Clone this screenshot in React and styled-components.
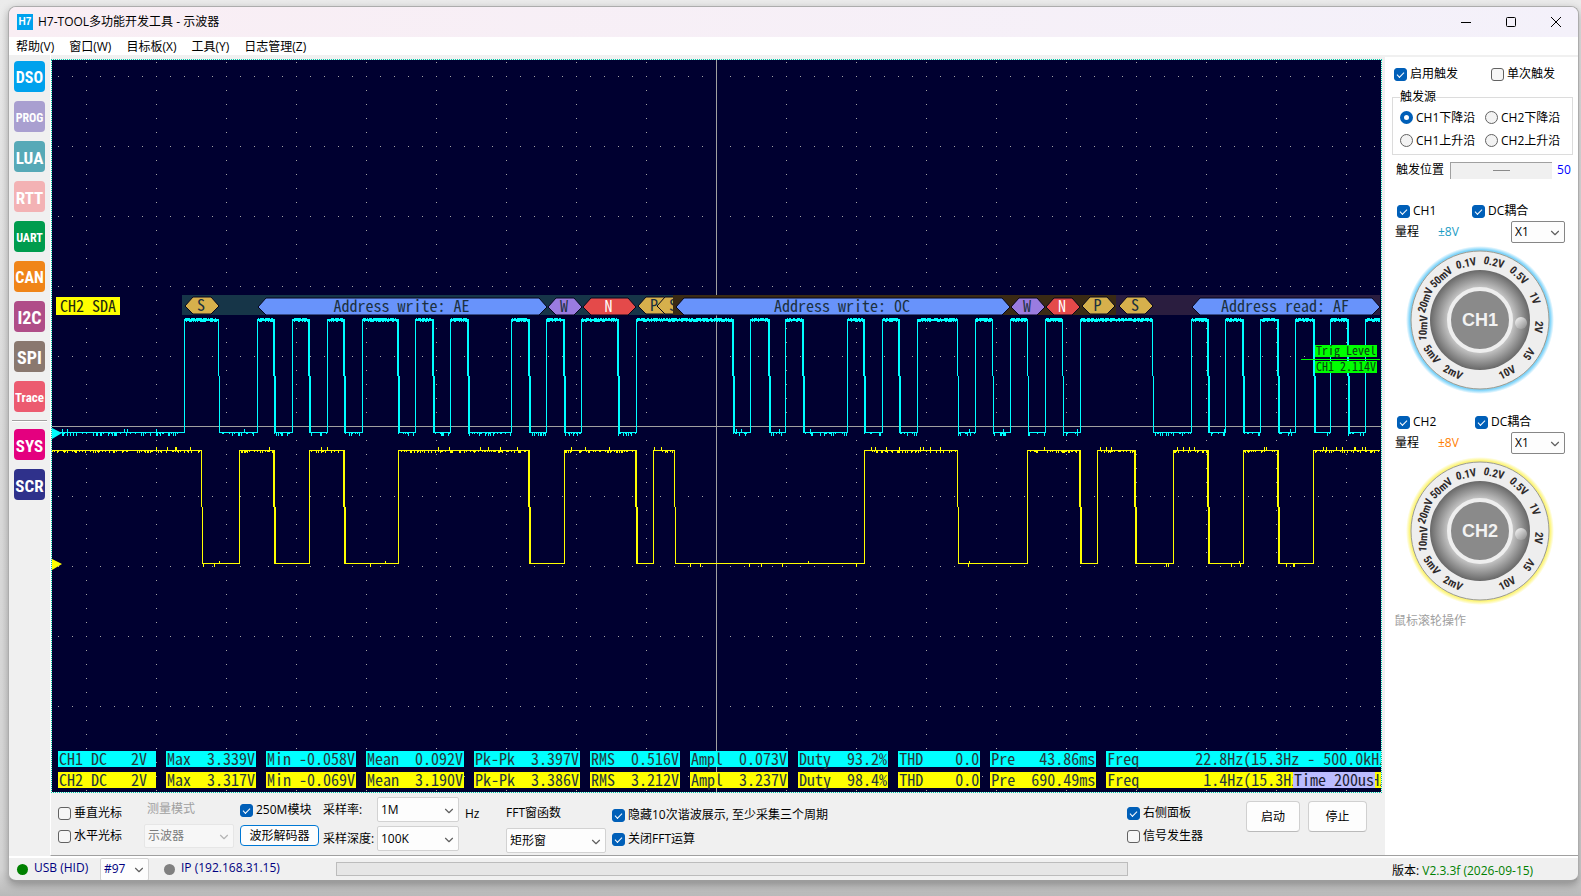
import React from "react";
import styled, { createGlobalStyle, css } from "styled-components";
import { ChevronDown } from "lucide-react";

const GlobalStyle = createGlobalStyle`
  * {
    box-sizing: border-box;
  }
  body {
    margin: 0;
    background: linear-gradient(#ebebeb, #dcdcdc 50%, #d6d6d6 97%, #b9b9b9);
    color: #000;
    font-family: "Open Sans", "Noto Sans CJK SC", sans-serif;
    font-size: 12px;
    line-height: 16px;
  }
  button, input, select, legend {
    font: inherit;
    color: inherit;
  }
`;

const MONO = `"Noto Sans Mono CJK SC", "Liberation Mono", monospace`;
const NARROW = `"Liberation Sans Narrow", "Roboto Condensed", "Liberation Sans", sans-serif`;

/* ---------- window ---------- */

const Desktop = styled.div`
  min-height: 100vh;
  padding: 6px 2px 14px 8px;
  display: flex;
`;

const Window = styled.div`
  flex: 1;
  display: flex;
  flex-direction: column;
  overflow: hidden;
  background: #f0f0f0;
  border: 1px solid #acacac;
  border-bottom: 2px solid #9c9c9c;
  border-radius: 8px;
  box-shadow: 0 3px 8px rgba(0, 0, 0, 0.3);
`;

const TitleBar = styled.header`
  height: 30px;
  display: flex;
  align-items: center;
  padding-left: 8px;
  background: linear-gradient(90deg, #f9eef4, #f4f1fa);
`;

const AppIcon = styled.span`
  width: 16px;
  height: 16px;
  margin-right: 5px;
  background: #00a2ed;
  color: #fff;
  font: bold 10px/16px "Liberation Sans", sans-serif;
  text-align: center;
`;

const Title = styled.h1`
  flex: 1;
  margin: 0;
  font-size: 12px;
  font-weight: 400;
`;

const CaptionButton = styled.button`
  width: 45px;
  height: 30px;
  padding: 0;
  border: 0;
  background: none;

  svg {
    display: block;
    margin: 0 auto;
  }
`;

const MenuBar = styled.nav`
  height: 18px;
  display: flex;
  align-items: flex-end;
  gap: 15px;
  padding-left: 7px;
  background: #fff;
`;

const MenuLink = styled.a`
  color: #000;
  text-decoration: none;
`;

const Body = styled.div`
  flex: 1;
  display: flex;
`;

const Main = styled.main`
  flex: 1;
  min-width: 0;
  display: flex;
  flex-direction: column;
  border-left: 1px solid #fff;
  border-bottom: 1px solid #a0a0a0;
`;

/* ---------- left toolbar ---------- */

const ToolBar = styled.aside`
  width: 41px;
  display: flex;
  flex-direction: column;
  align-items: center;
  gap: 9px;
  padding-top: 6px;
`;

const ToolButton = styled.button`
  width: 31px;
  height: 31px;
  padding: 2px 0 0;
  display: flex;
  justify-content: center;
  align-items: center;
  border: 0;
  border-radius: 4px;
  background: ${(p) => p.$color};
  color: #fff;
  font: bold ${(p) => p.$size || 16}px/20px ${NARROW};
`;

const Divider = styled.hr`
  width: 35px;
  height: 2px;
  margin: -1px 0 -2px;
  border: 0;
  border-top: 1px solid #a0a0a0;
  background: #fff;
`;

/* ---------- form parts ---------- */

const Tick = styled.input`
  appearance: none;
  flex: none;
  width: 13px;
  height: 13px;
  margin: 0 3px 0 0;
  border: 1px solid #626262;
  border-radius: 3px;
  background: #f6f6f6;

  &:checked {
    border-color: #005fb8;
    background: #005fb8;
  }
  &:checked::after {
    content: "";
    display: block;
    width: 6px;
    height: 3px;
    margin: 3px 0 0 2px;
    border-left: 1px solid #fff;
    border-bottom: 1px solid #fff;
    transform: rotate(-45deg);
  }
`;

const Radio = styled.input`
  appearance: none;
  flex: none;
  width: 13px;
  height: 13px;
  margin: 0 3px 0 0;
  border: 1px solid #626262;
  border-radius: 50%;
  background: #f3f3f3;

  &:checked {
    border: 4px solid #005fb8;
    background: #fff;
  }
`;

const OptionLabel = styled.label`
  display: flex;
  align-items: center;
  height: 16px;
  white-space: nowrap;
`;

const Text = styled.span`
  height: 16px;
  white-space: nowrap;
  color: ${(p) => p.$color || "#000"};
`;

const FieldLabel = styled.label`
  height: 16px;
  white-space: nowrap;
  color: ${(p) => (p.$muted ? "#a0a0a0" : "#000")};
  padding-left: ${(p) => (p.$muted ? 3 : 0)}px;
`;

const SelectBox = styled.span`
  position: relative;
  display: block;
  width: ${(p) => p.$width}px;
  height: ${(p) => p.$height || 25}px;

  svg {
    position: absolute;
    right: 3px;
    top: 50%;
    margin-top: -6px;
    pointer-events: none;
    color: ${(p) => (p.$muted ? "#b4b4b4" : "#606060")};
  }
`;

const NativeSelect = styled.select`
  appearance: none;
  width: 100%;
  height: 100%;
  padding: 0 0 0 3px;
  border: 1px solid ${(p) => (p.$strong ? "#868686" : "#d2d2d2")};
  border-radius: 2px;
  background: #fdfdfd;

  &:disabled {
    background: #f7f7f7;
    border-color: #e6e6e6;
    color: #7c7c7c;
    opacity: 1;
  }
`;

const Select = ({ id, value, width, height, strong, disabled, label }) => (
  <SelectBox $width={width} $height={height} $muted={disabled}>
    <NativeSelect id={id} aria-label={label} $strong={strong} disabled={disabled}>
      <option>{value}</option>
    </NativeSelect>
    <ChevronDown size={14} strokeWidth={2} />
  </SelectBox>
);

const Check = ({ children, checked }) => (
  <OptionLabel>
    <Tick type="checkbox" defaultChecked={checked} />
    {children}
  </OptionLabel>
);

const PushButton = styled.button`
  width: ${(p) => p.$width}px;
  height: 31px;
  padding: 0;
  border: 1px solid #d0d0d0;
  border-bottom-color: #bababa;
  border-radius: 4px;
  background: #fdfdfd;

  ${(p) =>
    p.$accent &&
    css`
      height: 21px;
      border-color: #0078d4;
      line-height: 18px;
    `}
`;

/* ---------- oscilloscope screen ---------- */

const Screen = styled.section`
  position: relative;
  flex: 1;
  min-height: 420px;
  margin: 4px 3px 0 0;
  overflow: hidden;
  background: #000030;
  background-clip: padding-box;
  border: 1px dotted #00c8a8;
`;

const Plot = styled.svg`
  position: absolute;
  inset: 0;
  display: block;
  width: 100%;
  height: 100%;

  text {
    font-family: ${MONO};
    font-size: 16px;
    white-space: pre;
  }
`;

const Readouts = styled.div`
  position: absolute;
  left: 6px;
  right: 0;
  bottom: 4px;
  display: flex;
  flex-direction: column;
  gap: 5px;
`;

const ReadoutRow = styled.div`
  display: flex;
  gap: 10px;
`;

const Readout = styled.span`
  flex: none;
  height: 16px;
  padding: 0 1px;
  background: ${(p) => p.$color};
  color: #27373c;
  font: 16px/14px ${MONO};
  white-space: pre;
`;

const TimeBase = styled.span`
  position: absolute;
  right: 6px;
  bottom: 4px;
  height: 16px;
  padding: 0 1px;
  background: #bcbcff;
  color: #1c1c30;
  font: 16px/14px ${MONO};
  white-space: pre;
`;

const bar = (x, y, w, h) => `M${x} ${y}h${w}v${h}h${-w}z`;

const makeRandom = (seed) => () => {
  seed = (seed * 16807) % 2147483647;
  return seed / 2147483647;
};

// [x, width of the edge]; the level toggles at every entry
const CLOCK_EDGES = [
  [132, 1], [166, 1], [205, 1], [221, 2], [240, 1], [256, 2], [275, 1],
  [291, 2], [310, 1], [345, 2], [363, 1], [380, 2], [398, 1], [415, 2],
  [459, 1], [476, 2], [494, 1], [511, 2], [529, 1], [565, 2], [584, 1],
  [680, 2], [698, 1], [716, 2], [733, 1], [750, 2], [795, 1], [811, 2],
  [830, 1], [846, 2], [865, 1], [905, 1], [923, 1], [940, 1], [958, 1],
  [975, 1], [993, 1], [1010, 1], [1028, 1], [1100, 1], [1139, 1],
  [1155, 2], [1173, 1], [1190, 2], [1208, 1], [1225, 2], [1243, 1],
  [1261, 2], [1278, 1], [1295, 2], [1313, 1],
];

const DATA_EDGES = [
  [149, 1], [187, 1], [221, 2], [257, 1], [291, 2], [346, 1], [476, 2],
  [512, 1], [583, 2], [601, 1], [622, 1], [812, 1], [905, 1], [975, 1],
  [1027, 2], [1045, 1], [1082, 2], [1121, 1], [1155, 2], [1191, 1],
  [1225, 2], [1261, 1],
];

const TRACE_END = 1328;

const clockFlat = (x1, x2, high, rnd) => {
  let d = high ? bar(x1, 259, x2 - x1, 2) : bar(x1, 372, x2 - x1, 1);
  for (let x = x1; x < x2; x++) {
    if (high) {
      if (rnd() < 0.7) d += bar(x, 258, 1, 1);
      if (rnd() < 0.5) d += bar(x, 261, 1, 1);
    } else {
      if (rnd() < 0.35) d += bar(x, 373, 1, rnd() < 0.5 ? 1 : 3);
      if (rnd() < 0.02) d += bar(x, 369, 1, 3);
    }
  }
  return d;
};

const dataFlat = (x1, x2, high, rnd) => {
  const y = high ? 390 : 503;
  let d = bar(x1, y, x2 - x1, 1);
  for (let x = x1; x < x2; x++) {
    if (high) {
      if (rnd() < 0.4) d += bar(x, 391, 1, rnd() < 0.5 ? 1 : 2);
      if (rnd() < 0.06) d += bar(x, 387, 1, 3);
    } else {
      if (rnd() < 0.03) d += bar(x, 501, 1, 2);
      if (rnd() < 0.03) d += bar(x, 504, 1, 3);
    }
  }
  return d;
};

const buildTrace = (edges, startHigh, top, bottom, flat, seed) => {
  const rnd = makeRandom(seed);
  const middle = top + Math.round((bottom - top) * 0.5);
  let high = startHigh;
  let x = 0;
  let d = "";
  edges.forEach(([edge, width]) => {
    d += flat(x, edge, high, rnd);
    if (high) {
      // a falling edge leans one pixel to the right
      d += bar(edge, top, width, middle - top);
      d += bar(edge + 1, middle, width, bottom - middle + 1);
    } else {
      d += bar(edge, top, 1, bottom - top + 1);
    }
    x = edge + 1;
    high = !high;
  });
  return d + flat(x, TRACE_END, high, rnd);
};

const CLOCK_PATH = buildTrace(CLOCK_EDGES, false, 259, 372, clockFlat, 11);
const DATA_PATH = buildTrace(DATA_EDGES, true, 390, 503, dataFlat, 23);

const TOKEN_COLORS = {
  flag: "#d6b04c",
  address: "#6893fb",
  write: "#9a7ce0",
  nack: "#e44a4a",
};

const TOKENS = [
  { x: 133, w: 34, kind: "flag", text: "S" },
  { x: 206, w: 289, kind: "address", text: "Address write: AE" },
  { x: 496, w: 34, kind: "write", text: "W" },
  { x: 531, w: 53, kind: "nack", text: "N" },
  { x: 586, w: 34, kind: "flag", text: "P" },
  { x: 605, w: 34, kind: "flag", text: "S", clip: "url(#cut)" },
  { x: 624, w: 334, kind: "address", text: "Address write: 0C" },
  { x: 959, w: 34, kind: "write", text: "W" },
  { x: 994, w: 34, kind: "nack", text: "N" },
  { x: 1030, w: 33, kind: "flag", text: "P" },
  { x: 1067, w: 34, kind: "flag", text: "S" },
  { x: 1140, w: 188, kind: "address", text: "Address read: AF" },
];

const Token = ({ x, w, kind, text, clip }) => {
  const y = kind === "flag" ? 237 : 238;
  const points = [
    [x, y + 9], [x + 8, y], [x + w - 8, y],
    [x + w, y + 9], [x + w - 8, y + 17], [x + 8, y + 17],
  ];
  return (
    <g clipPath={clip}>
      <polygon points={points.join(" ")} fill={TOKEN_COLORS[kind]} stroke="#05051c" />
      <text
        x={x + w / 2 - 1}
        y={y + 14}
        textAnchor="middle"
        fill={kind === "nack" ? "#fff" : "#1b3040"}
      >
        {text}
      </text>
    </g>
  );
};

const ScopePlot = () => (
  <Plot role="img" aria-label="示波器">
    <defs>
      <pattern id="rows" x="6" y="16" width="14" height="70" patternUnits="userSpaceOnUse">
        <rect width="1" height="1" fill="#a4a4a4" />
      </pattern>
      <pattern id="columns" x="34" y="2" width="70" height="14" patternUnits="userSpaceOnUse">
        <rect width="1" height="1" fill="#a4a4a4" />
      </pattern>
      <clipPath id="cut">
        <rect x="600" y="230" width="21" height="30" />
      </clipPath>
    </defs>
    <g shapeRendering="crispEdges">
      <rect width="100%" height="100%" fill="url(#rows)" />
      <rect width="100%" height="100%" fill="url(#columns)" />
      <rect y="366" width="100%" height="1" fill="#a0a0a0" />
      <rect x="664" width="1" height="100%" fill="#a0a0a0" />
    </g>

    <rect x="130" y="235" width="491" height="20" fill="#163548" />
    <rect x="621" y="235" width="495" height="20" fill="#3a2a14" />
    <rect x="1064" y="235" width="264" height="20" fill="#2a1d3f" />
    {TOKENS.map((token) => (
      <Token key={token.x} {...token} />
    ))}

    <rect x="4" y="237" width="64" height="18" fill="#ff0" />
    <text x="8" y="252" fill="#1e2a10">CH2 SDA</text>

    <path d={CLOCK_PATH} fill="#0ff" shapeRendering="crispEdges" />
    <path d={DATA_PATH} fill="#ff0" shapeRendering="crispEdges" />
    <path d="M0 368l10 5-10 6z" fill="#0ff" />
    <path d="M0 499l10 5-10 6z" fill="#ff0" />

    <rect x="1263" y="285" width="62" height="12" fill="#0f0" />
    <text x="1264" y="295" fill="#0c3c14" style={{ fontSize: 12 }}>Trig Level</text>
    <rect x="1263" y="301" width="62" height="12" fill="#0f0" />
    <text x="1264" y="311" fill="#0c3c14" style={{ fontSize: 12 }}>CH1 2.114V</text>
    <rect x="1249" y="299" width="79" height="1" fill="#0f0" />
  </Plot>
);

const CH1_VALUES = [
  "CH1 DC   2V ", "Max  3.339V", "Min -0.058V", "Mean  0.092V",
  "Pk-Pk  3.397V", "RMS  0.516V", "Ampl  0.073V", "Duty  93.2%",
  "THD    0.0", "Pre   43.86ms", "Freq       22.8Hz(15.3Hz - 500.0kHz)",
];

const CH2_VALUES = [
  "CH2 DC   2V ", "Max  3.317V", "Min -0.069V", "Mean  3.190V",
  "Pk-Pk  3.386V", "RMS  3.212V", "Ampl  3.237V", "Duty  98.4%",
  "THD    0.0", "Pre  690.49ms", "Freq        1.4Hz(15.3Hz - 500.0kHz)",
];

/* ---------- bottom controls ---------- */

const Controls = styled.section`
  height: 62px;
  display: grid;
  grid-template-columns: 86px 96px 83px 142px 41px 106px 1fr 119px 139px;
  padding-left: 7px;
`;

const Stack = styled.div`
  display: flex;
  flex-direction: column;
  gap: ${(p) => p.$gap || 7}px;
  padding-top: ${(p) => p.$top}px;
`;

const Sampling = styled.div`
  display: grid;
  grid-template-columns: 54px 82px;
  grid-auto-rows: 25px;
  row-gap: 4px;
  align-items: center;
  padding-top: 4px;
`;

const Actions = styled.div`
  display: flex;
  align-items: flex-start;
  gap: 8px;
  padding-top: 8px;
`;

/* ---------- right panel ---------- */

const SidePanel = styled.aside`
  width: 193px;
  margin-top: 2px;
  background: #fff;
  border-bottom: 1px solid #a0a0a0;
`;

const CheckRow = styled.div`
  display: grid;
  grid-template-columns: ${(p) => p.$first || 75}px 1fr;
  padding: ${(p) => p.$top}px 0 0 ${(p) => p.$left || 12}px;
`;

const TriggerSource = styled.fieldset`
  display: grid;
  grid-template-columns: 85px 1fr;
  grid-auto-rows: 23px;
  align-items: center;
  min-width: 0;
  margin: 7px 5px 0 7px;
  padding: 1px 0 2px 7px;
  border: 1px solid #dcdcdc;

  legend {
    height: 16px;
    padding: 0;
  }
`;

const SliderRow = styled.div`
  display: flex;
  align-items: center;
  height: 18px;
  margin-top: 6px;
  padding-left: 11px;
`;

const Slider = styled.input`
  appearance: none;
  width: 102px;
  height: 17px;
  margin: 0 5px 0 6px;
  background: #f0f0f0;
  border: 1px solid #a0a0a0;
  border-width: 1px 0 0 1px;

  &::-webkit-slider-thumb {
    appearance: none;
    width: 17px;
    height: 1px;
    background: #8a8a8a;
  }
`;

const RangeRow = styled.div`
  display: flex;
  align-items: center;
  height: 22px;
  margin-top: 2px;
  padding: 0 13px 0 10px;
`;

const RangeName = styled.span`
  width: 43px;
`;

const RangeValue = styled.span`
  flex: 1;
  color: ${(p) => p.$color};
`;

const KnobSvg = styled.svg`
  display: block;
  margin: 1px 0 0 19px;

  text {
    font-family: ${NARROW};
    font-weight: bold;
    text-anchor: middle;
  }
`;

const Hint = styled.p`
  margin: 6px 0 0 9px;
  color: #a0a0a0;
`;

const KNOB_MARKS = [
  ["2mV", -27, 52, 27], ["5mV", -48, 34, 54], ["10mV", -57, 8, -87],
  ["20mV", -55, -20, -70], ["50mV", -39, -43, -42], ["0.1V", -14, -57, -12],
  ["0.2V", 14, -58, 14], ["0.5V", 39, -45, 42], ["1V", 55, -22, 68],
  ["2V", 59, 7, 95], ["5V", 49, 34, -56], ["10V", 27, 52, -28],
];

const Knob = ({ name, glow }) => (
  <KnobSvg width="152" height="152" viewBox="-76 -76 152 152" role="img" aria-label={name}>
    <defs>
      <radialGradient id={`glow-${name}`}>
        <stop offset="0.9" stopColor={glow} />
        <stop offset="0.95" stopColor={glow} />
        <stop offset="1" stopColor={glow} stopOpacity="0" />
      </radialGradient>
      <radialGradient id={`dish-${name}`}>
        <stop offset="0.6" stopColor="#d2d2d2" />
        <stop offset="0.78" stopColor="#a2a2a2" />
        <stop offset="1" stopColor="#686868" />
      </radialGradient>
      <linearGradient id={`ball-${name}`} x1="0" y1="0" x2="1" y2="1">
        <stop offset="0.2" stopColor="#e4e4e4" />
        <stop offset="1" stopColor="#868686" />
      </linearGradient>
    </defs>
    <circle r="74" fill={`url(#glow-${name})`} />
    <circle r="69" fill="#eee" stroke="#9a9a90" />
    <circle r="50" fill={`url(#dish-${name})`} />
    <circle r="31" fill="#8a8a8a" stroke="#eee" strokeWidth="4" />
    <circle cx="41" cy="3" r="6" fill={`url(#ball-${name})`} />
    {KNOB_MARKS.map(([label, x, y, angle]) => (
      <text
        key={label}
        transform={`translate(${x} ${y}) rotate(${angle})`}
        y="4"
        fontSize="11"
        fill="#2e2a2a"
      >
        {label}
      </text>
    ))}
    <text
      y="6"
      fontSize="18"
      fill="#f2f2f2"
      style={{ fontFamily: '"Liberation Sans", sans-serif' }}
    >
      {name}
    </text>
  </KnobSvg>
);

const Channel = ({ name, top, first, color, glow }) => (
  <>
    <CheckRow $top={top} $first={first}>
      <Check checked>{name}</Check>
      <Check checked>DC耦合</Check>
    </CheckRow>
    <RangeRow>
      <RangeName>量程</RangeName>
      <RangeValue $color={color}>±8V</RangeValue>
      <Select label={`${name} 量程`} value="X1" width={54} height={22} strong />
    </RangeRow>
    <Knob name={name} glow={glow} />
  </>
);

/* ---------- status bar ---------- */

const StatusBar = styled.footer`
  height: 24px;
  display: flex;
  align-items: center;
  border-top: 2px solid #fff;
  padding-left: 8px;
  color: #000080;
`;

const Lamp = styled.span`
  width: 11px;
  height: 11px;
  margin-right: 6px;
  border-radius: 50%;
  background: ${(p) => p.$color};
`;

const StatusText = styled.span`
  width: ${(p) => p.$width}px;
  padding-bottom: 3px;
  white-space: nowrap;
`;

const StatusSelect = styled.div`
  margin-right: 15px;
`;

const ProgressBar = styled.progress`
  appearance: none;
  flex: 1;
  height: 14px;
  border: 1px solid #bcbcbc;
  background: #e6e6e6;

  &::-webkit-progress-bar {
    background: #e6e6e6;
  }
`;

const Version = styled.span`
  width: 450px;
  padding: 3px 0 0 264px;
  color: #008000;
  white-space: nowrap;
`;

const TOOLS = [
  ["DSO", "#00a2ed"],
  ["PROG", "#a99fd0", 12],
  ["LUA", "#57a9b7", 17],
  ["RTT", "#f3b2b4", 17],
  ["UART", "#009c4e", 12],
  ["CAN", "#f08519", 16],
  ["I2C", "#b04d88", 18],
  ["SPI", "#8a786f", 18],
  ["Trace", "#ec5b70", 13],
];

const SYSTEM_TOOLS = [
  ["SYS", "#e4007f", 17],
  ["SCR", "#2f318b", 17],
];

const App = () => (
  <Desktop>
    <GlobalStyle />
    <Window>
      <TitleBar>
        <AppIcon>H7</AppIcon>
        <Title>H7-TOOL多功能开发工具 - 示波器</Title>
        <CaptionButton aria-label="最小化">
          <svg width="12" height="12" stroke="#000">
            <path d="M1 6.5h10" />
          </svg>
        </CaptionButton>
        <CaptionButton aria-label="最大化">
          <svg width="12" height="12" stroke="#000" fill="none">
            <rect x="1.5" y="1.5" width="9" height="9" rx="1" />
          </svg>
        </CaptionButton>
        <CaptionButton aria-label="关闭">
          <svg width="12" height="12" stroke="#000">
            <path d="M1 1l10 10M11 1L1 11" />
          </svg>
        </CaptionButton>
      </TitleBar>
      <MenuBar>
        {["帮助(V)", "窗口(W)", "目标板(X)", "工具(Y)", "日志管理(Z)"].map((item) => (
          <MenuLink key={item} href="#">{item}</MenuLink>
        ))}
      </MenuBar>

      <Body>
        <ToolBar>
          {TOOLS.map(([name, color, size]) => (
            <ToolButton key={name} $color={color} $size={size}>{name}</ToolButton>
          ))}
          <Divider />
          {SYSTEM_TOOLS.map(([name, color, size]) => (
            <ToolButton key={name} $color={color} $size={size}>{name}</ToolButton>
          ))}
        </ToolBar>

        <Main>
          <Screen>
            <ScopePlot />
            <Readouts>
              <ReadoutRow>
                {CH1_VALUES.map((value) => (
                  <Readout key={value} $color="#0ff">{value}</Readout>
                ))}
              </ReadoutRow>
              <ReadoutRow>
                {CH2_VALUES.map((value) => (
                  <Readout key={value} $color="#ff0">{value}</Readout>
                ))}
              </ReadoutRow>
            </Readouts>
            <TimeBase>Time 200us</TimeBase>
          </Screen>

          <Controls>
            <Stack $top={12}>
              <Check>垂直光标</Check>
              <Check>水平光标</Check>
            </Stack>
            <Stack $top={8}>
              <FieldLabel htmlFor="mode" $muted>测量模式</FieldLabel>
              <Select id="mode" value="示波器" width={90} height={24} disabled />
            </Stack>
            <Stack $top={9}>
              <Check checked>250M模块</Check>
              <PushButton $width={79} $accent>波形解码器</PushButton>
            </Stack>
            <Sampling>
              <FieldLabel htmlFor="rate">采样率:</FieldLabel>
              <Select id="rate" value="1M" width={82} />
              <FieldLabel htmlFor="depth">采样深度:</FieldLabel>
              <Select id="depth" value="100K" width={82} />
            </Sampling>
            <Stack $top={13}>
              <Text>Hz</Text>
            </Stack>
            <Stack $top={12}>
              <FieldLabel htmlFor="fft">FFT窗函数</FieldLabel>
              <Select id="fft" value="矩形窗" width={100} />
            </Stack>
            <Stack $top={14} $gap={8}>
              <Check checked>隐藏10次谐波展示, 至少采集三个周期</Check>
              <Check checked>关闭FFT运算</Check>
            </Stack>
            <Stack $top={12}>
              <Check checked>右侧面板</Check>
              <Check>信号发生器</Check>
            </Stack>
            <Actions>
              <PushButton $width={54}>启动</PushButton>
              <PushButton $width={59}>停止</PushButton>
            </Actions>
          </Controls>
        </Main>

        <SidePanel>
          <CheckRow $top={9} $left={9} $first={97}>
            <Check checked>启用触发</Check>
            <Check>单次触发</Check>
          </CheckRow>
          <TriggerSource>
            <legend>触发源</legend>
            {["CH1下降沿", "CH2下降沿", "CH1上升沿", "CH2上升沿"].map((name, i) => (
              <OptionLabel key={name}>
                <Radio type="radio" name="source" defaultChecked={i === 0} />
                {name}
              </OptionLabel>
            ))}
          </TriggerSource>
          <SliderRow>
            <FieldLabel htmlFor="position">触发位置</FieldLabel>
            <Slider id="position" type="range" min="0" max="100" defaultValue="50" />
            <Text $color="#0000ff">50</Text>
          </SliderRow>
          <Channel name="CH1" top={24} color="#1a9cc4" glow="#7fd4fa" />
          <Channel name="CH2" top={18} first={78} color="#ff8000" glow="#fdf57c" />
          <Hint>鼠标滚轮操作</Hint>
        </SidePanel>
      </Body>

      <StatusBar>
        <Lamp $color="#008000" />
        <StatusText $width={66}>USB (HID)</StatusText>
        <StatusSelect>
          <Select label="设备" value="#97" width={49} height={23} />
        </StatusSelect>
        <Lamp $color="#808080" />
        <StatusText $width={155}>IP (192.168.31.15)</StatusText>
        <ProgressBar value="0" max="100" />
        <Version>
          <Text>版本:</Text> V2.3.3f (2026-09-15)
        </Version>
      </StatusBar>
    </Window>
  </Desktop>
);

export default App;
